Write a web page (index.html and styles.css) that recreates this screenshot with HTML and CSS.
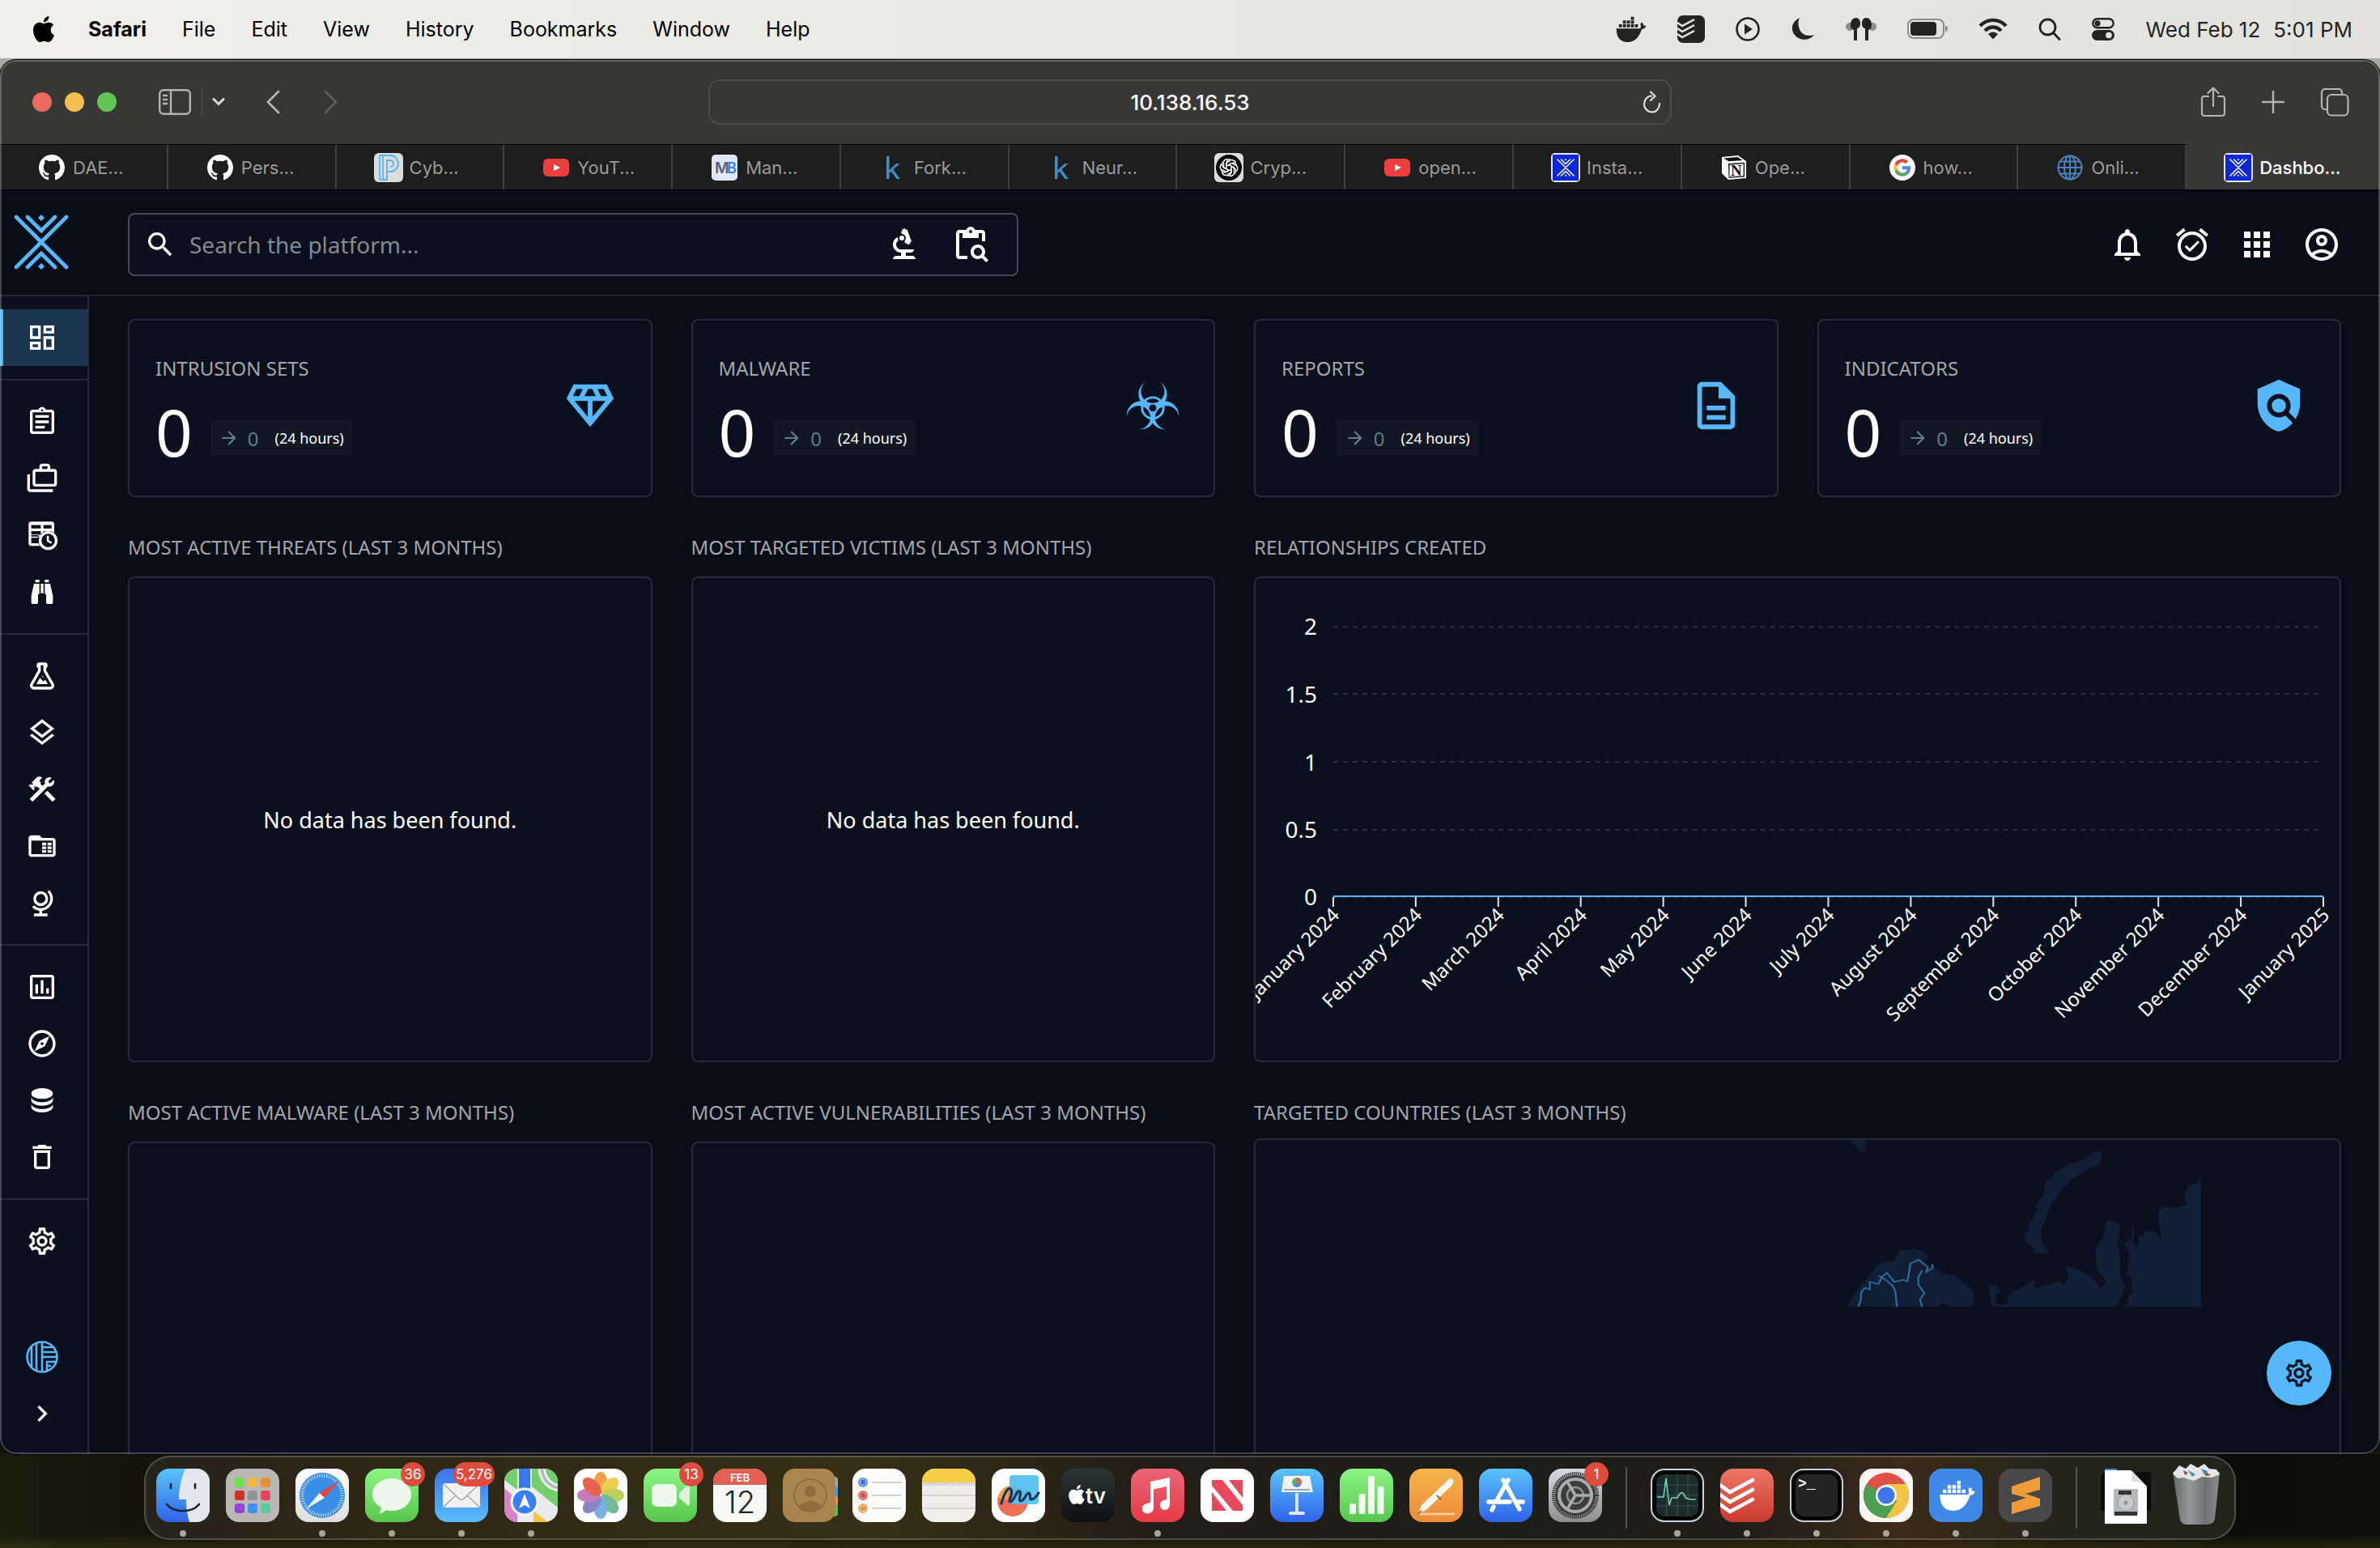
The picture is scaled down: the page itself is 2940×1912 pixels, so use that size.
FILE: index.html
```html
<!DOCTYPE html>
<html lang="en">
<head>
<meta charset="utf-8">
<title>Dashboard</title>
<link rel="stylesheet" href="styles.css">
</head>
<body>
<svg class="sprite" aria-hidden="true">
  <defs>
    <linearGradient id="g-blue" x1="0" y1="0" x2="0" y2="1"><stop offset="0" stop-color="#5ac4fb"/><stop offset="1" stop-color="#2f62ea"/></linearGradient>
    <linearGradient id="g-mail" x1="0" y1="0" x2="0" y2="1"><stop offset="0" stop-color="#3b72ee"/><stop offset="1" stop-color="#59bdfa"/></linearGradient>
    <linearGradient id="g-green" x1="0" y1="0" x2="0" y2="1"><stop offset="0" stop-color="#8df584"/><stop offset="1" stop-color="#58c64b"/></linearGradient>
    <linearGradient id="g-white" x1="0" y1="0" x2="0" y2="1"><stop offset="0" stop-color="#ffffff"/><stop offset="1" stop-color="#dedede"/></linearGradient>
    <linearGradient id="g-tv" x1="0" y1="0" x2="0" y2="1"><stop offset="0" stop-color="#2c3735"/><stop offset="1" stop-color="#0c1013"/></linearGradient>
    <linearGradient id="g-music" x1="0" y1="0" x2="0" y2="1"><stop offset="0" stop-color="#ec6477"/><stop offset="1" stop-color="#e53c46"/></linearGradient>
    <linearGradient id="g-orange" x1="0" y1="0" x2="0" y2="1"><stop offset="0" stop-color="#f5b54a"/><stop offset="1" stop-color="#ee8b38"/></linearGradient>
    <linearGradient id="g-grey" x1="0" y1="0" x2="0" y2="1"><stop offset="0" stop-color="#d5dde4"/><stop offset="1" stop-color="#8e8e8e"/></linearGradient>
    <linearGradient id="g-red" x1="0" y1="0" x2="0" y2="1"><stop offset="0" stop-color="#ee7566"/><stop offset="1" stop-color="#c93a2c"/></linearGradient>
    <linearGradient id="g-trash" x1="0" y1="0" x2="1" y2="0"><stop offset="0" stop-color="#6c6f72"/><stop offset=".35" stop-color="#a3a6a8"/><stop offset=".7" stop-color="#77797c"/><stop offset="1" stop-color="#96999b"/></linearGradient>
    <clipPath id="squircle"><rect width="66" height="66" rx="16"/></clipPath>
  </defs>
  <symbol id="i-github" viewBox="0 0 16 16"><path d="M8 0C3.58 0 0 3.58 0 8c0 3.54 2.29 6.53 5.47 7.59.4.07.55-.17.55-.38 0-.19-.01-.82-.01-1.49-2.01.37-2.53-.49-2.69-.94-.09-.23-.48-.94-.82-1.13-.28-.15-.68-.52-.01-.53.63-.01 1.08.58 1.23.82.72 1.21 1.87.87 2.33.66.07-.52.28-.87.51-1.07-1.78-.2-3.64-.89-3.64-3.95 0-.87.31-1.59.82-2.15-.08-.2-.36-1.02.08-2.12 0 0 .67-.21 2.2.82.64-.18 1.32-.27 2-.27s1.36.09 2 .27c1.53-1.04 2.2-.82 2.2-.82.44 1.1.16 1.92.08 2.12.51.56.82 1.27.82 2.15 0 3.07-1.87 3.75-3.65 3.95.29.25.54.73.54 1.48 0 1.07-.01 1.93-.01 2.2 0 .21.15.46.55.38A8.01 8.01 0 0 0 16 8c0-4.42-3.58-8-8-8z"/></symbol>
  <symbol id="i-youtube" viewBox="0 0 32 32"><rect y="5" width="32" height="22" rx="6" fill="#ec3f3d"/><path d="M13 12l8 4-8 4z" fill="#fff"/></symbol>
  <symbol id="i-kaggle" viewBox="0 0 32 32"><path d="M8 2h3.600v17l8.400-8h4.600l-8.200 7.600L25 30h-4.400l-6.800-9.200-2.200 2V30H8z" fill="#3f8ec4"/></symbol>
  <symbol id="i-cross" viewBox="0 0 68 68"><g fill="none" stroke="currentColor" stroke-width="4.600" stroke-linecap="round"><path d="M3 3l62 62M65 3L3 65M17 3l17 17L51 3M17 65l17-17 17 17"/></g><path d="M34 0l4 4-4 4-4-4zM34 60l4 4-4 4-4-4z" fill="currentColor"/></symbol>
  <symbol id="i-opencti" viewBox="0 0 36 36"><rect width="36" height="36" rx="5" fill="#e4e4ea"/><rect x="2" y="2" width="32" height="32" fill="#0c27d6"/><svg x="7" y="7" width="22" height="22" viewBox="0 0 68 68" color="#fff"><use href="#i-cross"/></svg></symbol>
  <symbol id="i-gear" viewBox="0 0 24 24"><path d="M19.430 12.980c.04-.32.07-.64.07-.98 0-.34-.03-.66-.07-.98l2.110-1.650c.19-.15.24-.42.12-.64l-2-3.460c-.09-.16-.26-.25-.44-.25-.06 0-.12.01-.17.03l-2.490 1c-.52-.4-1.080-.73-1.690-.98l-.38-2.650C14.460 2.180 14.250 2 14 2h-4c-.25 0-.46.18-.49.42l-.38 2.650c-.61.25-1.170.59-1.690.98l-2.490-1c-.06-.02-.12-.03-.18-.03-.17 0-.34.09-.43.25l-2 3.460c-.13.22-.07.49.12.64l2.110 1.650c-.04.32-.07.65-.07.98 0 .33.03.66.07.98l-2.110 1.650c-.19.15-.24.42-.12.64l2 3.460c.09.16.26.25.44.25.06 0 .12-.01.17-.03l2.490-1c.52.4 1.080.73 1.690.98l.38 2.650c.03.24.24.42.49.42h4c.25 0 .46-.18.49-.42l.38-2.650c.61-.25 1.170-.59 1.690-.98l2.490 1c.06.02.12.03.18.03.17 0 .34-.09.43-.25l2-3.460c.12-.22.07-.49-.12-.64l-2.110-1.650zm-1.980-1.710c.04.31.05.52.05.73 0 .21-.02.43-.05.73l-.14 1.130.89.7 1.080.84-.7 1.210-1.270-.51-1.040-.42-.9.68c-.43.32-.84.56-1.250.73l-1.060.43-.16 1.130-.2 1.350h-1.400l-.19-1.350-.16-1.130-1.060-.43c-.43-.18-.83-.41-1.230-.71l-.91-.7-1.060.43-1.270.51-.7-1.210 1.080-.84.89-.7-.14-1.130c-.03-.31-.05-.54-.05-.74s.02-.43.05-.73l.14-1.130-.89-.7-1.080-.84.7-1.210 1.270.51 1.040.42.9-.68c.43-.32.84-.56 1.250-.73l1.060-.43.16-1.130.2-1.350h1.390l.19 1.350.16 1.130 1.060.43c.43.18.83.41 1.230.71l.91.7 1.060-.43 1.270-.51.7 1.210-1.070.85-.89.7.14 1.130zM12 8c-2.210 0-4 1.790-4 4s1.790 4 4 4 4-1.790 4-4-1.790-4-4-4zm0 6c-1.100 0-2-.9-2-2s.9-2 2-2 2 .9 2 2-.9 2-2 2z"/></symbol>
  <symbol id="i-arrow" viewBox="0 0 24 24"><path d="M12 4l-1.410 1.410L16.170 11H4v2h12.170l-5.580 5.590L12 20l8-8z"/></symbol>
  <symbol id="i-whale" viewBox="0 -2 48 42"><path d="M0 18h38c2-1 2-4 1-6 0-2 1-3 2-4 3 2 3 4 3 5 2 0 3 0 4 1-1 3-4 5-7 5C38 30 31 40 18 40 5 40 0 31 0 18z"/><path d="M4 11h5v5H4zM10.500 11h5v5h-5zM17 11h5v5h-5zM23.500 11h5v5h-5zM30 11h5v5h-5zM10.500 5h5v5h-5zM17 5h5v5h-5zM23.500 5h5v5h-5zM23.500-1h5v5h-5z"/></symbol>
  <symbol id="i-apple" viewBox="0 0 24 24"><path d="M12.152 6.896c-.948 0-2.415-1.078-3.960-1.040-2.040.027-3.910 1.183-4.961 3.014-2.117 3.675-.546 9.103 1.519 12.090 1.013 1.454 2.208 3.090 3.792 3.039 1.520-.065 2.090-.987 3.935-.987 1.831 0 2.350.987 3.960.948 1.637-.026 2.676-1.480 3.676-2.948 1.156-1.688 1.636-3.325 1.662-3.415-.039-.013-3.182-1.221-3.220-4.857-.026-3.040 2.480-4.494 2.597-4.559-1.429-2.090-3.623-2.324-4.390-2.376-2-.156-3.675 1.090-4.610 1.090zM15.530 3.830c.843-1.012 1.400-2.427 1.245-3.830-1.207.052-2.662.805-3.532 1.818-.78.896-1.454 2.338-1.273 3.714 1.338.104 2.715-.688 3.559-1.701"/></symbol>
</svg>

<header class="menubar">
  <nav class="menubar__menus" aria-label="Menu bar">
    <button class="menu menu--apple" aria-label="Apple"><svg width="32" height="32"><use href="#i-apple"/></svg></button>
    <button class="menu menu--app">Safari</button>
    <button class="menu">File</button>
    <button class="menu">Edit</button>
    <button class="menu">View</button>
    <button class="menu">History</button>
    <button class="menu">Bookmarks</button>
    <button class="menu">Window</button>
    <button class="menu">Help</button>
  </nav>
  <div class="menubar__status">
    <svg width="38" height="32"><use href="#i-whale"/></svg>
    <svg width="34" height="34" viewBox="0 0 34 34"><rect width="34" height="34" rx="7"/><path d="M0 9l6 4 15-8M0 16l6 4 15-8M0 23l6 4 15-8" fill="none" stroke="#e8e7e3" stroke-width="2.400"/></svg>
    <svg width="30" height="30" viewBox="0 0 30 30"><circle cx="15" cy="15" r="13.500" fill="none" stroke="currentColor" stroke-width="2.600"/><path d="M11 8.500v13l10-6.500z"/></svg>
    <svg width="30" height="30" viewBox="0 0 30 30"><path d="M11 1C3 5 0 12 3 19c4 9 18 13 26 3-9 3-16-1-18-7-2-5-2-9 0-14z"/></svg>
    <svg width="38" height="30" viewBox="0 0 38 30"><ellipse cx="5" cy="12" rx="5" ry="5" opacity=".45"/><ellipse cx="33" cy="12" rx="5" ry="5" opacity=".45"/><path d="M6 10c0-6 3-9 7-9 3 0 5 3 5 7s-2 6-4 6v15h-4V16c-3-1-4-3-4-6zM32 10c0-6-3-9-7-9-3 0-5 3-5 7s2 6 4 6v15h4V16c3-1 4-3 4-6z"/></svg>
    <svg width="50" height="26" viewBox="0 0 50 26"><rect x="1" y="1" width="44" height="23" rx="7" fill="none" stroke="#8c8c89" stroke-width="2"/><rect x="4" y="4" width="32" height="17" rx="4"/><path d="M47 8.500c4 1 4 7 0 8z" fill="#8c8c89"/></svg>
    <svg width="36" height="28" viewBox="0 0 36 28"><g fill="none" stroke="currentColor" stroke-width="4.400"><path d="M2 10c9-9.500 23-9.500 32 0M8 16c6-6 14-6 20 0"/></g><path d="M12 20c4-3.500 8-3.500 12 0l-6 6.500z"/></svg>
    <svg width="28" height="28" viewBox="0 0 28 28"><g fill="none" stroke="currentColor" stroke-width="2.800" stroke-linecap="round"><circle cx="11.500" cy="11.500" r="9.500"/><path d="M18.500 18.500l7.500 8"/></g></svg>
    <svg width="28" height="28" viewBox="0 0 28 28"><rect x="1.300" y="1.300" width="25.400" height="11" rx="5.500" fill="none" stroke="currentColor" stroke-width="2.400"/><circle cx="7" cy="6.800" r="3.600"/><rect y="15" width="28" height="13" rx="6.500"/><circle cx="21" cy="21.500" r="3.800" fill="#e5e4e0"/></svg>
    <time class="menubar__clock"><span>Wed Feb 12</span><span>5:01 PM</span></time>
  </div>
</header>

<main class="window">
  <div class="toolbar">
    <div class="toolbar__left">
      <div class="lights">
        <button class="light light--close" aria-label="Close"></button>
        <button class="light light--min" aria-label="Minimise"></button>
        <button class="light light--max" aria-label="Zoom"></button>
      </div>
      <button class="tool tool--sidebar" aria-label="Sidebar"><svg width="40" height="32" viewBox="0 0 40 32"><g fill="none" stroke="currentColor" stroke-width="2.400"><rect x="1.200" y="1.200" width="37.600" height="29.600" rx="5"/><path d="M15 1v30M5 8h6M5 13h6M5 18h6"/></g></svg></button>
      <button class="tool tool--groups" aria-label="Tab groups"><svg width="16" height="10" viewBox="0 0 16 10"><path d="M2 1.500l6 6 6-6" fill="none" stroke="#dcdcda" stroke-width="3" stroke-linecap="round"/></svg></button>
      <button class="tool tool--back" aria-label="Back"><svg width="18" height="30" viewBox="0 0 18 30"><path d="M16 2L3 15l13 13" fill="none" stroke="currentColor" stroke-width="2.800" stroke-linecap="round"/></svg></button>
      <button class="tool tool--forward" aria-label="Forward" disabled><svg width="18" height="30" viewBox="0 0 18 30"><path d="M2 2l13 13L2 28" fill="none" stroke="currentColor" stroke-width="2.800" stroke-linecap="round"/></svg></button>
    </div>
    <div class="address">
      <input class="address__input" type="text" aria-label="Address" value="10.138.16.53">
      <button class="address__reload" aria-label="Reload"><svg width="26" height="28" viewBox="0 0 26 28"><path d="M13 6.500A9.500 10 0 1 0 23 16M12 1.500l5.500 5.300-5.500 5.200" fill="none" stroke="#dededc" stroke-width="2.200" stroke-linecap="round" stroke-linejoin="round"/></svg></button>
    </div>
    <div class="toolbar__right">
      <button class="tool" aria-label="Share"><svg width="32" height="38" viewBox="0 0 32 38"><g fill="none" stroke="currentColor" stroke-width="2.200" stroke-linecap="round" stroke-linejoin="round"><path d="M10 12H5a3 3 0 0 0-3 3v18a3 3 0 0 0 3 3h22a3 3 0 0 0 3-3V15a3 3 0 0 0-3-3h-5M16 24V2M9.500 8L16 1.500 22.500 8"/></g></svg></button>
      <button class="tool" aria-label="New tab"><svg width="28" height="28" viewBox="0 0 28 28"><path d="M14 1v26M1 14h26" stroke="currentColor" stroke-width="2.400" stroke-linecap="round"/></svg></button>
      <button class="tool" aria-label="Tab overview"><svg width="36" height="36" viewBox="0 0 36 36"><g fill="none" stroke="currentColor" stroke-width="2.200"><rect x="9" y="9" width="25.500" height="25.500" rx="5"/><path d="M9 27H6a4 4 0 0 1-4-4V6a4 4 0 0 1 4-4h17a4 4 0 0 1 4 4v3"/></g></svg></button>
    </div>
  </div>

  <nav class="tabs" aria-label="Tabs">
    <a class="tab" href="#"><svg class="tab__icon tab__icon--s" color="#fff"><use href="#i-github"/></svg>DAE...</a>
    <a class="tab" href="#"><svg class="tab__icon tab__icon--s" color="#fff"><use href="#i-github"/></svg>Pers...</a>
    <a class="tab" href="#"><svg class="tab__icon" viewBox="0 0 36 36"><rect width="36" height="36" rx="6" fill="#dcdcdc"/><path d="M7 3v30M11 33V3h9a10 10 0 0 1 0 20h-4V9h4a4 4 0 0 1 0 8M7 3h4M7 33h4M11 33h5V23" fill="none" stroke="#57b6ea" stroke-width="1.800"/></svg>Cyb...</a>
    <a class="tab" href="#"><svg class="tab__icon tab__icon--s"><use href="#i-youtube"/></svg>YouT...</a>
    <a class="tab" href="#"><svg class="tab__icon tab__icon--s" viewBox="0 0 32 32"><rect width="32" height="32" rx="5" fill="#dfe8f6"/><text x="4" y="23" class="glyph" font-size="19" fill="#56617a">M</text><text x="19" y="23" class="glyph" font-size="18" fill="#3b7ee8">B</text></svg>Man...</a>
    <a class="tab" href="#"><svg class="tab__icon tab__icon--s"><use href="#i-kaggle"/></svg>Fork...</a>
    <a class="tab" href="#"><svg class="tab__icon tab__icon--s"><use href="#i-kaggle"/></svg>Neur...</a>
    <a class="tab" href="#"><svg class="tab__icon" viewBox="0 0 36 36"><rect width="36" height="36" rx="6" fill="#dcdcdc"/><circle cx="18" cy="18" r="16" fill="#000"/><g fill="none" stroke="#fff" stroke-width="1.500"><path id="petal" d="M15 16.200v-3.800a4.300 4.300 0 0 1 6.400-3.700 4.300 4.300 0 0 1 5 3.600M15 16.200l6.500-3.700 5 3"/><use href="#petal" transform="rotate(60 18 18)"/><use href="#petal" transform="rotate(120 18 18)"/><use href="#petal" transform="rotate(180 18 18)"/><use href="#petal" transform="rotate(240 18 18)"/><use href="#petal" transform="rotate(300 18 18)"/></g></svg>Cryp...</a>
    <a class="tab" href="#"><svg class="tab__icon tab__icon--s"><use href="#i-youtube"/></svg>open...</a>
    <a class="tab" href="#"><svg class="tab__icon"><use href="#i-opencti"/></svg>Insta...</a>
    <a class="tab" href="#"><svg class="tab__icon tab__icon--s" viewBox="0 0 32 32"><path d="M1 3l20-2 10 7v21l-22 2-8-8z" fill="#fff"/><path d="M3.500 4.500l17-1.400 6 4-17 1.200zM9 11l20-1.300v17.800L9.500 28.800z" fill="#111"/><path d="M10.500 12.400l17.200-1.100v14.900l-17.200 1.100z" fill="#fff"/><text x="12" y="26" class="glyph glyph--serif" font-size="19" fill="#111">N</text></svg>Ope...</a>
    <a class="tab" href="#"><svg class="tab__icon tab__icon--s" viewBox="0 0 72 72"><circle cx="36" cy="36" r="36" fill="#fff"/><g transform="translate(12 12)"><path fill="#db4b3e" d="M24 9.500c3.540 0 6.710 1.220 9.210 3.600l6.850-6.850C35.900 2.380 30.470 0 24 0 14.620 0 6.510 5.380 2.560 13.220l7.980 6.190C12.430 13.720 17.740 9.500 24 9.500z"/><path fill="#5187ec" d="M46.980 24.550c0-1.570-.15-3.090-.38-4.550H24v9.020h12.940c-.58 2.960-2.260 5.480-4.780 7.180l7.730 6c4.510-4.180 7.090-10.360 7.090-17.650z"/><path fill="#f4bf42" d="M10.530 28.590c-.48-1.450-.76-2.990-.76-4.590s.27-3.140.76-4.590l-7.980-6.190C.92 16.460 0 20.120 0 24c0 3.880.92 7.540 2.560 10.780l7.970-6.190z"/><path fill="#58a55c" d="M24 48c6.480 0 11.930-2.130 15.890-5.810l-7.730-6c-2.150 1.450-4.920 2.300-8.160 2.300-6.260 0-11.570-4.220-13.470-9.910l-7.980 6.190C6.510 42.620 14.620 48 24 48z"/></g></svg>how...</a>
    <a class="tab" href="#"><svg class="tab__icon tab__icon--s" viewBox="0 0 32 32"><g fill="none" stroke="#4c82bb" stroke-width="2"><circle cx="16" cy="16" r="14.500"/><ellipse cx="16" cy="16" rx="7" ry="14.500"/><path d="M16 1v30M1.500 16h29M4 8.500h24M4 23.500h24"/></g></svg>Onli...</a>
    <a class="tab tab--active" href="#" aria-current="page"><svg class="tab__icon"><use href="#i-opencti"/></svg>Dashbo...</a>
  </nav>

  <div class="app">
    <header class="topbar">
      <a class="brand" href="#" aria-label="Home"><svg width="68" height="68"><use href="#i-cross"/></svg></a>
      <form class="search" role="search">
        <svg width="40" height="40" viewBox="0 0 24 24"><path d="M15.500 14h-.79l-.28-.27C15.410 12.590 16 11.110 16 9.500 16 5.910 13.090 3 9.500 3S3 5.910 3 9.500 5.910 16 9.500 16c1.610 0 3.090-.59 4.230-1.570l.27.28v.79l5 4.990L20.490 19l-4.990-5zm-6 0C7.010 14 5 11.990 5 9.500S7.010 5 9.500 5 14 7.010 14 9.500 11.990 14 9.500 14z"/></svg>
        <input class="search__input" type="text" aria-label="Search the platform" placeholder="Search the platform...">
        <button class="icon-btn" type="button" aria-label="Advanced search"><svg width="48" height="48" viewBox="0 0 24 24"><path d="M7 19c-1.100 0-2 .9-2 2h14c0-1.100-.9-2-2-2h-4v-2h3c1.100 0 2-.9 2-2h-8c-1.660 0-3-1.340-3-3 0-1.090.59-2.040 1.460-2.560C8.170 9.030 8 8.540 8 8c0-.21.04-.42.09-.62C6.280 8.130 5 9.920 5 12c0 2.760 2.240 5 5 5v2H7z"/><path d="M10.560 5.510C11.910 5.540 13 6.640 13 8c0 .75-.33 1.410-.85 1.870l.59 1.620.94-.34.34.94 1.880-.68-.34-.94.94-.34-2.740-7.520-.94.34-.34-.94-1.880.68.34.94-.94.35.9 2.470z"/><circle cx="10.500" cy="8" r="1.500"/></svg></button>
        <button class="icon-btn" type="button" aria-label="Bulk search"><svg width="48" height="48" viewBox="0 0 24 24"><path d="M5 5h2v3h10V5h2v5h2V5c0-1.100-.9-2-2-2h-4.180C14.400 1.840 13.300 1 12 1S9.600 1.840 9.180 3H5C3.900 3 3 3.900 3 5v14c0 1.100.9 2 2 2h5v-2H5V5zm7-2c.55 0 1 .45 1 1s-.45 1-1 1-1-.45-1-1 .45-1 1-1z"/><path d="M20.300 18.900c.4-.7.7-1.500.7-2.400 0-2.500-2-4.500-4.500-4.500S12 14 12 16.500s2 4.500 4.500 4.500c.9 0 1.700-.3 2.400-.7l2.700 2.700 1.400-1.400-2.700-2.700zm-3.800.1c-1.400 0-2.500-1.100-2.500-2.500s1.100-2.500 2.500-2.500 2.500 1.100 2.500 2.500-1.100 2.500-2.500 2.500z"/></svg></button>
      </form>
      <div class="topbar__actions">
        <button class="icon-btn" aria-label="Notifications"><svg width="48" height="48" viewBox="0 0 24 24"><path d="M12 22c1.100 0 2-.9 2-2h-4c0 1.100.9 2 2 2zm6-6v-5c0-3.070-1.630-5.640-4.500-6.320V4c0-.83-.67-1.500-1.500-1.500s-1.500.67-1.500 1.500v.68C7.640 5.360 6 7.920 6 11v5l-2 2v1h16v-1l-2-2zm-2 1H8v-6c0-2.480 1.510-4.500 4-4.500s4 2.020 4 4.500v6z"/></svg></button>
        <button class="icon-btn" aria-label="Triggers"><svg width="48" height="48" viewBox="0 0 24 24"><path d="M22 5.720l-4.600-3.860-1.290 1.530 4.600 3.860L22 5.720zM7.880 3.390L6.600 1.860 2 5.710l1.290 1.530 4.590-3.850zM12 4c-4.970 0-9 4.030-9 9s4.020 9 9 9c4.970 0 9-4.030 9-9s-4.030-9-9-9zm0 16c-3.870 0-7-3.130-7-7s3.130-7 7-7 7 3.130 7 7-3.130 7-7 7zm-1.460-5.470L8.410 12.400l-1.060 1.060 3.180 3.180 6-6-1.060-1.060-4.930 4.950z"/></svg></button>
        <button class="icon-btn" aria-label="Apps"><svg width="48" height="48" viewBox="0 0 24 24"><path d="M4 8h4V4H4v4zm6 12h4v-4h-4v4zm-6 0h4v-4H4v4zm0-6h4v-4H4v4zm6 0h4v-4h-4v4zm6-10v4h4V4h-4zm-6 4h4V4h-4v4zm6 6h4v-4h-4v4zm0 6h4v-4h-4v4z"/></svg></button>
        <button class="icon-btn" aria-label="Profile"><svg width="48" height="48" viewBox="0 0 24 24"><path d="M12 2C6.480 2 2 6.480 2 12s4.480 10 10 10 10-4.480 10-10S17.520 2 12 2zM7.350 18.500C8.660 17.560 10.260 17 12 17s3.340.56 4.650 1.500C15.340 19.440 13.740 20 12 20s-3.340-.56-4.650-1.500zm10.790-1.380C16.450 15.800 14.320 15 12 15s-4.450.8-6.140 2.120C4.700 15.730 4 13.950 4 12c0-4.420 3.580-8 8-8s8 3.580 8 8c0 1.950-.7 3.730-1.860 5.120z"/><path d="M12 6c-1.930 0-3.500 1.570-3.500 3.500S10.070 13 12 13s3.500-1.570 3.500-3.500S13.930 6 12 6zm0 5c-.83 0-1.500-.67-1.500-1.500S11.170 8 12 8s1.500.67 1.500 1.500S12.830 11 12 11z"/></svg></button>
      </div>
    </header>

    <div class="layout">
      <nav class="sidebar" aria-label="Sections">
        <ul class="sidebar__group">
          <li><a class="nav-item nav-item--active" href="#" aria-label="Home"><svg viewBox="0 0 24 24"><path d="M19 5v2h-4V5h4M9 5v6H5V5h4m10 8v6h-4v-6h4M9 17v2H5v-2h4M21 3h-8v6h8V3zM11 3H3v10h8V3zm10 8h-8v10h8V11zm-10 4H3v6h8v-6z"/></svg></a></li>
        </ul>
        <ul class="sidebar__group">
          <li><a class="nav-item" href="#" aria-label="Analyses"><svg viewBox="0 0 24 24"><path d="M7 15h7v2H7zm0-4h10v2H7zm0-4h10v2H7z"/><path d="M19 3h-4.180C14.400 1.840 13.300 1 12 1s-2.400.84-2.820 2H5c-1.100 0-2 .9-2 2v14c0 1.100.9 2 2 2h14c1.100 0 2-.9 2-2V5c0-1.100-.9-2-2-2zm-7-.25c.41 0 .75.34.75.75s-.34.75-.75.75-.75-.34-.75-.75.34-.75.75-.75zM19 19H5V5h14v14z"/></svg></a></li>
          <li><a class="nav-item" href="#" aria-label="Cases"><svg viewBox="0 0 24 24"><path d="M21 5h-3V3c0-1.100-.9-2-2-2h-4c-1.100 0-2 .9-2 2v2H7c-1.100 0-2 .9-2 2v9c0 1.100.9 2 2 2h14c1.100 0 2-.9 2-2V7c0-1.100-.9-2-2-2zm-9-2h4v2h-4V3zm9 13H7V7h14v9z"/><path d="M3 9H1v11c0 1.100.9 2 2 2h17v-2H3V9z"/></svg></a></li>
          <li><a class="nav-item" href="#" aria-label="Events"><svg viewBox="0 0 24 24"><path d="M4 2h15a2 2 0 0 1 2 2v6.300a7 7 0 0 0-2-1.100V9h-6v.7A7 7 0 0 0 10.300 12 7 7 0 0 0 9.700 13H11V9H4v3h5.500a7 7 0 0 0-.5 2H4v4h5.400c.3.700.6 1.400 1 2H4a2 2 0 0 1-2-2V4a2 2 0 0 1 2-2zm0 5h7V4.500H4zm9 0h6V4.500h-6zm-9 6h6v-1.500H4z"/><path fill-rule="evenodd" d="M16.500 9a7 7 0 1 1 0 14 7 7 0 0 1 0-14zm0 2a5 5 0 1 0 0 10 5 5 0 0 0 0-10zm-1 1.500H17v3.200l2.400 1.500-.8 1.200-3.100-1.900z"/></svg></a></li>
          <li><a class="nav-item" href="#" aria-label="Observations"><svg viewBox="0 0 24 24"><path d="M11 6H13V13H11V6M9 20A1 1 0 0 1 8 21H5A1 1 0 0 1 4 20V15L6 6H10V13A1 1 0 0 1 9 14V20M10 5H7V3H10V5M15 20V14A1 1 0 0 1 14 13V6H18L20 15V20A1 1 0 0 1 19 21H16A1 1 0 0 1 15 20M14 5V3H17V5H14Z"/></svg></a></li>
        </ul>
        <ul class="sidebar__group">
          <li><a class="nav-item" href="#" aria-label="Threats"><svg viewBox="0 0 24 24"><path d="M5 19A1 1 0 0 0 6 20H18A1 1 0 0 0 19 19C19 18.790 18.930 18.590 18.820 18.430L13 8.350V4H11V8.350L5.180 18.430C5.070 18.590 5 18.790 5 19M6 22A3 3 0 0 1 3 19C3 18.400 3.180 17.840 3.500 17.370L9 7.810V6A1 1 0 0 1 8 5V4A2 2 0 0 1 10 2H14A2 2 0 0 1 16 4V5A1 1 0 0 1 15 6V7.810L20.500 17.370C20.820 17.840 21 18.400 21 19A3 3 0 0 1 18 22H6M13 16L14.340 14.660L16.270 18H7.730L10.390 13.390L13 16M12.500 12A.5.5 0 0 1 13 12.500A.5.5 0 0 1 12.500 13A.5.5 0 0 1 12 12.500A.5.5 0 0 1 12.500 12Z"/></svg></a></li>
          <li><a class="nav-item" href="#" aria-label="Arsenal"><svg viewBox="0 0 24 24"><path d="M11.990 18.540l-7.370-5.730L3 14.070l9 7 9-7-1.630-1.270zM12 16l7.360-5.730L21 9l-9-7-9 7 1.630 1.270L12 16zm0-11.470L17.740 9 12 13.470 6.260 9 12 4.530z"/></svg></a></li>
          <li><a class="nav-item" href="#" aria-label="Techniques"><svg viewBox="0 0 24 24"><path d="M13.783 15.172l2.121-2.121 5.996 5.996-2.121 2.121z"/><path d="M17.500 10c1.930 0 3.500-1.570 3.500-3.500 0-.58-.16-1.120-.41-1.600l-2.700 2.700-1.490-1.490 2.700-2.700c-.48-.25-1.020-.41-1.600-.41C15.570 3 14 4.570 14 6.500c0 .41.08.8.21 1.160l-1.850 1.850-1.780-1.780.71-.71-1.410-1.410L12 3.490c-1.170-1.170-3.070-1.170-4.240 0L4.220 7.030l1.410 1.410H2.810l-.71.71 3.540 3.540.71-.71V9.150l1.410 1.410.71-.71 1.780 1.780-7.410 7.410 2.120 2.120L16.340 9.790c.36.13.75.21 1.160.21z"/></svg></a></li>
          <li><a class="nav-item" href="#" aria-label="Entities"><svg viewBox="0 0 24 24"><path d="M20 6h-8l-2-2H4c-1.100 0-2 .9-2 2v12c0 1.100.9 2 2 2h16c1.100 0 2-.9 2-2V8c0-1.100-.9-2-2-2zm0 12H4V8h16v10z"/><path d="M12 9.500h3v2h-3zM16 9.500h3v2h-3zM12 12.300h3v2h-3zM16 12.300h3v2h-3zM12 15h3v2h-3zM16 15h3v2h-3z"/></svg></a></li>
          <li><a class="nav-item" href="#" aria-label="Locations"><svg viewBox="0 0 24 24"><path d="M17.360 2.640L15.950 4.060C17.260 5.370 18 7.140 18 9A7 7 0 0 1 11 16C9.150 16 7.370 15.260 6.060 13.950L4.640 15.360C6.080 16.800 7.970 17.710 10 17.930V20H6V22H16V20H12V17.940C16.550 17.430 20 13.580 20 9C20 6.620 19.050 4.330 17.360 2.640M11 3.500A5.500 5.500 0 0 0 5.500 9A5.500 5.500 0 0 0 11 14.500A5.500 5.500 0 0 0 16.500 9A5.500 5.500 0 0 0 11 3.500M11 5.500C12.940 5.500 14.500 7.070 14.500 9A3.500 3.500 0 0 1 11 12.500A3.500 3.500 0 0 1 7.500 9A3.500 3.500 0 0 1 11 5.500Z"/></svg></a></li>
        </ul>
        <ul class="sidebar__group">
          <li><a class="nav-item" href="#" aria-label="Dashboards"><svg viewBox="0 0 24 24"><path d="M9 17H7v-7h2v7zm4 0h-2V7h2v10zm4 0h-2v-4h2v4zm2 2H5V5h14v14zm0-16H5c-1.100 0-2 .9-2 2v14c0 1.100.9 2 2 2h14c1.100 0 2-.9 2-2V5c0-1.100-.9-2-2-2z"/></svg></a></li>
          <li><a class="nav-item" href="#" aria-label="Investigations"><svg viewBox="0 0 24 24"><path d="M12 2C6.480 2 2 6.480 2 12s4.480 10 10 10 10-4.480 10-10S17.520 2 12 2zm0 18c-4.410 0-8-3.590-8-8s3.590-8 8-8 8 3.590 8 8-3.590 8-8 8zm-5.500-2.500l7.510-3.490L17.500 6.500 9.990 9.990 6.500 17.500zm5.500-6.600c.61 0 1.100.49 1.100 1.100s-.49 1.100-1.100 1.100-1.100-.49-1.100-1.100.49-1.100 1.100-1.100z"/></svg></a></li>
          <li><a class="nav-item" href="#" aria-label="Data"><svg viewBox="0 0 24 24"><ellipse cx="12" cy="7" rx="8" ry="4"/><path d="M4 9.500c0 2.200 3.600 4 8 4s8-1.800 8-4V12c0 2.200-3.600 4-8 4s-8-1.800-8-4zM4 14.500c0 2.200 3.600 4 8 4s8-1.800 8-4V17c0 2.200-3.600 4-8 4s-8-1.800-8-4z"/></svg></a></li>
          <li><a class="nav-item" href="#" aria-label="Trash"><svg viewBox="0 0 24 24"><path d="M6 19c0 1.100.9 2 2 2h8c1.100 0 2-.9 2-2V7H6v12zM8 9h8v10H8V9zm7.500-5l-1-1h-5l-1 1H5v2h14V4h-3.500z"/></svg></a></li>
        </ul>
        <ul class="sidebar__group sidebar__group--last">
          <li><a class="nav-item" href="#" aria-label="Settings"><svg><use href="#i-gear"/></svg></a></li>
        </ul>
        <ul class="sidebar__foot">
          <li><a class="nav-item nav-item--logo" href="#" aria-label="Filigran"><svg viewBox="0 0 40 40"><g fill="none" stroke="currentColor" stroke-width="2.600"><circle cx="20" cy="20" r="18.500"/><path d="M7 7v26M13 3v34M20 2v36M20 8h14M20 14h18M20 20h18M26 38V26h12M26 31h5"/></g></svg></a></li>
          <li><button class="nav-item" aria-label="Expand"><svg viewBox="0 0 24 24"><path d="M10 6L8.590 7.410 13.170 12l-4.580 4.590L10 18l6-6z"/></svg></button></li>
        </ul>
      </nav>

      <section class="content">
        <div class="grid">
          <article class="card stat">
            <div class="stat__body">
              <h2 class="label">Intrusion sets</h2>
              <p class="stat__line"><strong class="stat__value">0</strong><span class="trend"><svg><use href="#i-arrow"/></svg><span class="trend__value">0</span><span>(24 hours)</span></span></p>
            </div>
            <svg class="stat__icon" viewBox="0 0 24 24"><path d="M19 3H5L2 9l10 12L22 9l-3-6zM9.620 8l1.500-3h1.760l1.500 3H9.620zM11 10v6.680L5.440 10H11zm2 0h5.560L13 16.680V10zm6.260-2h-2.650l-1.500-3h2.650l1.500 3zM6.240 5h2.650l-1.500 3H4.740l1.500-3z"/></svg>
          </article>
          <article class="card stat">
            <div class="stat__body">
              <h2 class="label">Malware</h2>
              <p class="stat__line"><strong class="stat__value">0</strong><span class="trend"><svg><use href="#i-arrow"/></svg><span class="trend__value">0</span><span>(24 hours)</span></span></p>
            </div>
            <svg class="stat__icon" viewBox="0 0 24 24"><path d="M23 16.060C23 16.290 23 16.500 22.960 16.700C22.780 14.140 20.640 12.110 18 12.110C17.630 12.110 17.270 12.160 16.920 12.230C16.960 12.500 17 12.730 17 13C17 15.350 15.310 17.320 13.070 17.810C13.420 20.050 15.310 21.790 17.650 21.960C17.430 22 17.220 22 17 22C14.920 22 13.070 20.940 12 19.340C10.930 20.940 9.090 22 7 22C6.780 22 6.570 22 6.350 21.960C8.690 21.790 10.570 20.060 10.930 17.810C8.680 17.320 7 15.350 7 13C7 12.730 7.040 12.500 7.070 12.230C6.730 12.160 6.370 12.110 6 12.110C3.360 12.110 1.220 14.140 1.030 16.700C1 16.500 1 16.290 1 16.060C1 12.850 3.590 10.240 6.810 10.140C6.300 9.270 6 8.250 6 7.170C6 4.940 7.230 3 9.060 2C7.810 2.900 7 4.340 7 6C7 7.350 7.560 8.590 8.470 9.500C9.380 8.590 10.620 8.040 12 8.040C13.370 8.040 14.620 8.590 15.500 9.500C16.430 8.590 17 7.350 17 6C17 4.340 16.180 2.900 14.940 2C16.770 3 18 4.940 18 7.170C18 8.250 17.700 9.270 17.190 10.140C20.420 10.240 23 12.850 23 16.060M9.270 10.110C10.050 10.620 11 10.920 12 10.920C13 10.920 13.950 10.620 14.730 10.110C14 9.450 13.060 9.030 12 9.030C10.940 9.030 10 9.450 9.270 10.110M12 14.470C12.820 14.470 13.500 13.800 13.500 13A1.500 1.500 0 0 0 12 11.500A1.500 1.500 0 0 0 10.500 13C10.500 13.800 11.170 14.470 12 14.470M10.970 16.790C10.870 14.900 9.710 13.290 8.050 12.550C8.030 12.700 8 12.840 8 13C8 14.820 9.270 16.340 10.970 16.790M15.960 12.550C14.290 13.290 13.120 14.900 13 16.790C14.730 16.340 16 14.820 16 13C16 12.840 15.970 12.700 15.960 12.550Z"/></svg>
          </article>
          <article class="card stat">
            <div class="stat__body">
              <h2 class="label">Reports</h2>
              <p class="stat__line"><strong class="stat__value">0</strong><span class="trend"><svg><use href="#i-arrow"/></svg><span class="trend__value">0</span><span>(24 hours)</span></span></p>
            </div>
            <svg class="stat__icon" viewBox="0 0 24 24"><path d="M8 16h8v2H8zm0-4h8v2H8zm6-10H6c-1.100 0-2 .9-2 2v16c0 1.100.89 2 1.990 2H18c1.100 0 2-.9 2-2V8l-6-6zm4 18H6V4h7v5h5v11z"/></svg>
          </article>
          <article class="card stat">
            <div class="stat__body">
              <h2 class="label">Indicators</h2>
              <p class="stat__line"><strong class="stat__value">0</strong><span class="trend"><svg><use href="#i-arrow"/></svg><span class="trend__value">0</span><span>(24 hours)</span></span></p>
            </div>
            <svg class="stat__icon" viewBox="0 0 24 24"><path d="M21 5l-9-4-9 4v6c0 5.550 3.840 10.740 9 12 2.300-.56 4.330-1.900 5.880-3.710l-3.120-3.120c-1.940 1.290-4.580 1.070-6.290-.64-1.950-1.950-1.950-5.120 0-7.070 1.950-1.950 5.120-1.950 7.070 0 1.710 1.710 1.920 4.350.64 6.290l2.900 2.900C20.290 15.690 21 13.380 21 11V5z"/><circle cx="12" cy="12" r="3"/></svg>
          </article>
        </div>

        <div class="grid">
          <section class="widget"><h2 class="label">Most active threats (last 3 months)</h2><div class="card panel"><p>No data has been found.</p></div></section>
          <section class="widget"><h2 class="label">Most targeted victims (last 3 months)</h2><div class="card panel"><p>No data has been found.</p></div></section>
          <section class="widget widget--wide"><h2 class="label">Relationships created</h2>
            <div class="card panel">
              <svg class="chart" viewBox="0 0 1340 596" role="img" aria-label="Relationships created per month">
                <path class="chart__grid" d="M96 60h1224M96 143h1224M96 227h1224M96 311h1224M96 394h1224"/>
                <path class="chart__ticks" d="M96 394v12M198 394v12M300 394v12M402 394v12M504 394v12M606 394v12M708 394v12M810 394v12M912 394v12M1014 394v12M1116 394v12M1218 394v12M1320 394v12"/>
                <path class="chart__line" d="M96 393h1224"/>
                <g class="chart__y"><text x="76" y="70">2</text><text x="76" y="154">1.5</text><text x="76" y="238">1</text><text x="76" y="321">0.5</text><text x="76" y="404">0</text></g>
                <g class="chart__x">
                  <text transform="translate(105 418) rotate(-45)">January 2024</text>
                  <text transform="translate(207 418) rotate(-45)">February 2024</text>
                  <text transform="translate(309 418) rotate(-45)">March 2024</text>
                  <text transform="translate(411 418) rotate(-45)">April 2024</text>
                  <text transform="translate(513 418) rotate(-45)">May 2024</text>
                  <text transform="translate(615 418) rotate(-45)">June 2024</text>
                  <text transform="translate(717 418) rotate(-45)">July 2024</text>
                  <text transform="translate(819 418) rotate(-45)">August 2024</text>
                  <text transform="translate(921 418) rotate(-45)">September 2024</text>
                  <text transform="translate(1023 418) rotate(-45)">October 2024</text>
                  <text transform="translate(1125 418) rotate(-45)">November 2024</text>
                  <text transform="translate(1227 418) rotate(-45)">December 2024</text>
                  <text transform="translate(1329 418) rotate(-45)">January 2025</text>
                </g>
              </svg>
            </div>
          </section>
        </div>

        <div class="grid">
          <section class="widget"><h2 class="label">Most active malware (last 3 months)</h2><div class="card panel"></div></section>
          <section class="widget"><h2 class="label">Most active vulnerabilities (last 3 months)</h2><div class="card panel"></div></section>
          <section class="widget widget--wide widget--map"><h2 class="label">Targeted countries (last 3 months)</h2>
            <div class="card panel">
              <svg class="map" viewBox="170 204 930 618" preserveAspectRatio="none" aria-hidden="true">
                <g fill="#111e35">
                  <path d="M184 204h38v42h-14l-12-18z"/>
                  <path d="M176 822L192 775 215 735 245 680 270 654 297 652 312 612 335 613 350 605 370 615 388 638 375 650 385 675 400 672 425 700 455 708 490 745 505 770 508 805 503 822H443L428 810 415 813 413 822z"/>
                  <path d="M832 242L841 265 836 290 800 315 757 355 730 398 715 425 700 470 683 530 680 560 686 590 704 624H664L660 600 645 588 638 575V552L648 545 650 515 672 462 664 452 690 400 689 368 720 325 752 293 795 276 815 252z"/>
                  <path d="M553 822L548 795 546 755 543 736 570 748 574 768 562 775V800L575 816 592 812 595 780 662 722 667 728 658 745 675 753 685 740 712 738 725 724 742 744 754 712 744 672 780 685 810 712 840 754 851 725 828 685 822 608 843 565 851 508 862 500 889 515 888 545 881 590 888 625V705L901 740 893 785 877 822z"/>
                  <path d="M898 822L908 810 910 785 921 768 915 710 905 703 912 630 901 588 918 565 920 512 926 555 922 592 933 602 936 565 962 541 978 542 998 572 989 520V465L1005 450 1030 455 1062 445 1056 408 1066 375 1085 367 1100 342V822z"/>
                </g>
                <path d="M203 822l6-24 2-32 10-14 12 6v-28l22 8 10-26 12-16 12 20 8 14 24-8 10 6 4-26 4-40 12-8 10-6 8 10 16 16-4 18 16-12v-16M256 706l22 20 16 20 6 20 4 56M370 688l-10 24v28l16 32-12 24 6 26" fill="none" stroke="#2c6b98" stroke-width="5"/>
              </svg>
            </div>
          </section>
        </div>
      </section>
      <button class="fab" aria-label="Dashboard settings"><svg width="40" height="40"><use href="#i-gear"/></svg></button>
    </div>
  </div>
</main>

<footer class="dock-area">
  <div class="dock">
    <button class="dock__item is-running" aria-label="Finder"><svg viewBox="0 0 66 66"><g clip-path="url(#squircle)"><rect width="66" height="66" fill="url(#g-blue)"/><path d="M36 0c-5 12-8 24-8 38h9c0 10 1 19 4 28h25V0z" fill="#e4e9f1"/></g><g fill="none" stroke="#1c2430" stroke-width="2.600" stroke-linecap="round"><path d="M18 19v5M48 19v5M13 44c9 11 31 11 40 0"/></g></svg></button>
    <button class="dock__item" aria-label="Launchpad"><svg viewBox="0 0 66 66"><rect width="66" height="66" rx="16" fill="#b9b8b6"/><rect x="11" y="11" width="12" height="12" rx="3" fill="#6fe04f"/><rect x="27" y="11" width="12" height="12" rx="3" fill="#f2b93b"/><rect x="43" y="11" width="12" height="12" rx="3" fill="#ea8f36"/><rect x="11" y="27" width="12" height="12" rx="3" fill="#d33025"/><rect x="27" y="27" width="12" height="12" rx="3" fill="#8f9599"/><rect x="43" y="27" width="12" height="12" rx="3" fill="#e8465c"/><rect x="11" y="43" width="12" height="12" rx="3" fill="#9545d6"/><rect x="27" y="43" width="12" height="12" rx="3" fill="#3d8ff2"/><rect x="43" y="43" width="12" height="12" rx="3" fill="#58c9a0"/></svg></button>
    <button class="dock__item is-running" aria-label="Safari"><svg viewBox="0 0 66 66"><rect width="66" height="66" rx="16" fill="url(#g-white)"/><circle cx="33" cy="33" r="28" fill="#3a8ee6"/><circle cx="33" cy="33" r="24.500" fill="none" stroke="#d5e8fa" stroke-width="4" stroke-dasharray="1 2"/><path d="M54 15L29.500 30l6.500 6z" fill="#e2463b"/><path d="M13 50l16.500-20 6.500 6z" fill="#f5f5f5"/></svg></button>
    <button class="dock__item is-running" aria-label="Messages, 36 unread"><svg viewBox="0 0 66 66"><rect width="66" height="66" rx="16" fill="url(#g-green)"/><path d="M33 12c14 0 24 9 24 20S47 52 33 52c-3 0-5 0-7-1-3 3-6 4-9 4 2-2 3-4 3-7-7-4-11-9-11-16 0-11 10-20 24-20z" fill="#eef7ec"/></svg><span class="badge">36</span></button>
    <button class="dock__item is-running" aria-label="Mail, 5,276 unread"><svg viewBox="0 0 66 66"><rect width="66" height="66" rx="16" fill="url(#g-mail)"/><rect x="10" y="18" width="46" height="30" rx="3" fill="#f1f1f1"/><path d="M11 19l19 18c2 2 4 2 6 0l19-18M11 47l15-14M55 47L40 33" fill="none" stroke="#a9a9ab" stroke-width="1.600"/></svg><span class="badge">5,276</span></button>
    <button class="dock__item is-running" aria-label="Maps"><svg viewBox="0 0 66 66"><g clip-path="url(#squircle)"><rect width="66" height="66" fill="#e9e9ee"/><path d="M0 0h16v26L0 14zM34 0h32v48L34 22z" fill="#73cf6a"/><path d="M0 24l16 14v28H0z" fill="#d982c6"/><path d="M36 52l18 14H36z" fill="#f5c53c"/><path d="M18 0h14v40H18z" fill="#3879f0"/><path d="M46 0c2 14 10 22 22 24" fill="none" stroke="#f4f4f6" stroke-width="9"/><path d="M46 0c2 14 10 22 22 24" fill="none" stroke="#b7b9c2" stroke-width="4"/></g><circle cx="25" cy="41" r="16" fill="#3a7ff5" stroke="#fff" stroke-width="3"/><path d="M25 31l7 18-7-4-7 4z" fill="#fff"/></svg></button>
    <button class="dock__item" aria-label="Photos"><svg viewBox="0 0 66 66"><rect width="66" height="66" rx="16" fill="#fdfdfd"/><g opacity=".9"><ellipse cx="33" cy="18" rx="8.500" ry="14" fill="#f0953b"/><ellipse cx="33" cy="18" rx="8.500" ry="14" fill="#edc93c" transform="rotate(45 33 33)"/><ellipse cx="33" cy="18" rx="8.500" ry="14" fill="#b5cd45" transform="rotate(90 33 33)"/><ellipse cx="33" cy="18" rx="8.500" ry="14" fill="#62b58b" transform="rotate(135 33 33)"/><ellipse cx="33" cy="18" rx="8.500" ry="14" fill="#6aa8dc" transform="rotate(180 33 33)"/><ellipse cx="33" cy="18" rx="8.500" ry="14" fill="#7d79c2" transform="rotate(225 33 33)"/><ellipse cx="33" cy="18" rx="8.500" ry="14" fill="#bf71b4" transform="rotate(270 33 33)"/><ellipse cx="33" cy="18" rx="8.500" ry="14" fill="#e5533f" transform="rotate(315 33 33)"/></g></svg></button>
    <button class="dock__item" aria-label="FaceTime, 13 missed"><svg viewBox="0 0 66 66"><rect width="66" height="66" rx="16" fill="url(#g-green)"/><rect x="10" y="19" width="31" height="28" rx="7" fill="#eff8ee"/><path d="M44 30l10-9c1-1 3 0 3 1v22c0 1-2 2-3 1l-10-9z" fill="#dff2dd"/></svg><span class="badge">13</span></button>
    <button class="dock__item" aria-label="Calendar"><svg viewBox="0 0 66 66"><g clip-path="url(#squircle)"><rect width="66" height="66" fill="#f8f8f7"/><rect width="66" height="20" fill="#e35f54"/></g><text x="33" y="16" text-anchor="middle" class="glyph" font-size="13" fill="#fff">FEB</text><text x="33" y="55" text-anchor="middle" class="glyph glyph--thin" font-size="38" fill="#232323">12</text></svg></button>
    <button class="dock__item" aria-label="Contacts"><svg viewBox="0 0 66 66"><rect x="56" y="10" width="12" height="16" rx="4" fill="#a5a7a6"/><rect x="56" y="22" width="12" height="16" rx="4" fill="#4a9bdc"/><rect x="56" y="34" width="12" height="14" rx="4" fill="#e79540"/><rect x="56" y="45" width="12" height="14" rx="4" fill="#5fbb57"/><rect width="65" height="66" rx="15" fill="#a9844f"/><g fill="none" stroke="#8a683a" stroke-width="1.600"><circle cx="34" cy="33" r="20"/></g><circle cx="34" cy="28" r="7" fill="#8f6d3e"/><path d="M20 47c4-9 24-9 28 0-7 8-21 8-28 0z" fill="#8f6d3e"/></svg></button>
    <button class="dock__item" aria-label="Reminders"><svg viewBox="0 0 66 66"><rect width="66" height="66" rx="16" fill="#fbfbfa"/><g fill="none" stroke-width="1.600"><circle cx="13" cy="17" r="5" stroke="#3478f0"/><circle cx="13" cy="33" r="5" stroke="#e5493e"/><circle cx="13" cy="49" r="5" stroke="#ee9637"/><path d="M24 17h36M24 33h36M24 49h36" stroke="#c3c3c5" stroke-width="1.400"/></g><circle cx="13" cy="17" r="3.400" fill="#3478f0"/><circle cx="13" cy="33" r="3.400" fill="#e5493e"/><circle cx="13" cy="49" r="3.400" fill="#ee9637"/></svg></button>
    <button class="dock__item" aria-label="Notes"><svg viewBox="0 0 66 66"><g clip-path="url(#squircle)"><rect width="66" height="66" fill="#efeeeb"/><rect width="66" height="17" fill="#f6cd47"/><path d="M0 18h66M0 33h66M0 49h66" stroke="#cfceca" stroke-width="1.600"/><path d="M1 20h65" stroke="#b5b4b0" stroke-width="2" stroke-dasharray="1 2"/></g></svg></button>
    <button class="dock__item" aria-label="Freeform"><svg viewBox="0 0 66 66"><rect width="66" height="66" rx="16" fill="#fff"/><circle cx="26" cy="40" r="19" fill="#ef6f56"/><path d="M8 36c2-8 7-13 14-15l-2 17z" fill="#f0a23e"/><rect x="22" y="8" width="36" height="36" rx="4" fill="#53c0ea" opacity=".92"/><path d="M12 43c4-14 9-22 12-17 3 4-4 15-1 15 5 0 7-14 11-13 4 0-2 12 2 12 5 0 6-10 10-10 3 1 0 8 3 8s6-3 9-8" fill="none" stroke="#14385c" stroke-width="3.200" stroke-linecap="round"/></svg></button>
    <button class="dock__item" aria-label="TV"><svg viewBox="0 0 66 66"><rect width="66" height="66" rx="16" fill="url(#g-tv)"/><g fill="#fff"><use href="#i-apple" x="7" y="20" width="24" height="24"/></g><text x="30" y="43" class="glyph" font-size="26" fill="#fff">tv</text></svg></button>
    <button class="dock__item is-running" aria-label="Music"><svg viewBox="0 0 66 66"><rect width="66" height="66" rx="16" fill="url(#g-music)"/><path d="M24 16l24-5v33c0 9-12 9-12 1 0-5 4-6 8-7V22l-16 3.500V48c0 9-13 10-14 2-1-5 4-7 10-8z" fill="#fff"/></svg></button>
    <button class="dock__item" aria-label="News"><svg viewBox="0 0 66 66"><rect width="66" height="66" rx="16" fill="#fff"/><path d="M14 14h13l25 31v7H40L14 21zM35 14h17v22zM14 29v23h18z" fill="#e8495e"/></svg></button>
    <button class="dock__item" aria-label="Keynote"><svg viewBox="0 0 66 66"><rect width="66" height="66" rx="16" fill="url(#g-blue)"/><path d="M17 9h32l4 20H14z" fill="#f3f4f7"/><path d="M17 25h32v2H17z" fill="#9aa6b8"/><path d="M31 30h4v24h-4z" fill="#dfe4ec"/><rect x="23" y="53" width="20" height="4" rx="2" fill="#e5e8ee"/><circle cx="33" cy="17" r="6" fill="#58b66b"/><path d="M33 17v-6a6 6 0 0 1 5 9z" fill="#e5604c"/><path d="M33 17l5 3a6 6 0 0 1-9 1z" fill="#4f86e0"/></svg></button>
    <button class="dock__item" aria-label="Numbers"><svg viewBox="0 0 66 66"><rect width="66" height="66" rx="16" fill="url(#g-green)"/><g fill="#f4faf3"><rect x="12" y="43" width="8" height="13" rx="2"/><rect x="23.500" y="31" width="8" height="25" rx="2"/><rect x="35" y="9" width="8" height="47" rx="2"/><rect x="46.500" y="22" width="8" height="34" rx="2"/></g></svg></button>
    <button class="dock__item" aria-label="Pages"><svg viewBox="0 0 66 66"><rect width="66" height="66" rx="16" fill="url(#g-orange)"/><path d="M12 56h44" stroke="#f8d3a6" stroke-width="2.400"/><path d="M50 12c5 0 5 4 3 8L22 50 11 56l4-11z" fill="#f7f5f2"/><path d="M34 33l5 5M11 56l4-4" stroke="#6a5a48" stroke-width="1.600"/></svg></button>
    <button class="dock__item" aria-label="App Store"><svg viewBox="0 0 66 66"><rect width="66" height="66" rx="16" fill="url(#g-blue)"/><g stroke="#fff" stroke-width="5.400" stroke-linecap="round"><path d="M36 14L21 41M18 47l-2 4M30 14l20 36M12 41h26M46 41h8"/></g></svg></button>
    <button class="dock__item" aria-label="System Settings, 1 notice"><svg viewBox="0 0 66 66"><rect width="66" height="66" rx="16" fill="url(#g-grey)"/><circle cx="33" cy="33" r="27" fill="none" stroke="#333" stroke-width="4" stroke-dasharray="1.500 1"/><circle cx="33" cy="33" r="25" fill="#3b3c3d"/><circle cx="33" cy="33" r="20" fill="none" stroke="#a9abac" stroke-width="4"/><circle cx="33" cy="33" r="10" fill="none" stroke="#8e9091" stroke-width="2.600"/><path d="M33 33h20M33 33L23 16M33 33L23 50" stroke="#a9abac" stroke-width="3.600"/></svg><span class="badge">1</span></button>
    <span class="dock__sep"></span>
    <button class="dock__item is-running" aria-label="Activity Monitor"><svg viewBox="0 0 66 66"><rect x="1" y="1" width="64" height="64" rx="16" fill="#050505" stroke="#c6d6dc" stroke-width="2"/><rect x="7" y="7" width="52" height="52" rx="10" fill="#1d2c2b"/><path d="M20 7v52M33 7v52M46 7v52M7 20h52M7 33h52M7 46h52" stroke="#36504d" stroke-width="1"/><path d="M8 35h8l3-23 4 33 3-9h7c4-8 7-9 10 0l6 2h7" fill="none" stroke="#6fd3c0" stroke-width="1.600"/></svg></button>
    <button class="dock__item is-running" aria-label="Todoist"><svg viewBox="0 0 66 66"><g clip-path="url(#squircle)"><rect width="66" height="66" fill="url(#g-red)"/><path d="M-2 19l14 10 28-15M-2 31l14 10 28-15M-2 43l14 10 28-15" fill="none" stroke="#fff" stroke-width="4.600" stroke-linecap="round"/></g></svg></button>
    <button class="dock__item is-running" aria-label="Terminal"><svg viewBox="0 0 66 66"><rect x="1" y="1" width="64" height="64" rx="16" fill="#050505" stroke="#c6d0d8" stroke-width="2"/><rect x="7" y="7" width="52" height="52" rx="10" fill="#252525"/><text x="10" y="24" class="glyph glyph--mono" font-size="18" fill="#fff">&gt;_</text></svg></button>
    <button class="dock__item is-running" aria-label="Chrome"><svg viewBox="0 0 66 66"><rect width="66" height="66" rx="16" fill="#f7f6f4"/><circle cx="33" cy="33" r="28" fill="#de5145"/><path d="M33 33L8.700 19A28 28 0 0 0 33 61l14-20z" fill="#4c9f51"/><path d="M33 19h24.200A28 28 0 0 1 33 61l13-21z" fill="#f3c343"/><circle cx="33" cy="33" r="13" fill="#fff"/><circle cx="33" cy="33" r="10.500" fill="#4175e8"/></svg></button>
    <button class="dock__item is-running" aria-label="Docker"><svg viewBox="0 0 66 66"><rect width="66" height="66" rx="16" fill="#3f88e6"/><g fill="#fff"><use href="#i-whale" x="11" y="14" width="48" height="38"/></g></svg></button>
    <button class="dock__item is-running" aria-label="Sublime Text"><svg viewBox="0 0 66 66"><rect width="66" height="66" rx="16" fill="#484848"/><path d="M16 22l35-12v16L33 31l18 6v9L16 56V42l18-6-18-5z" fill="#f19c38"/></svg></button>
    <span class="dock__sep"></span>
    <button class="dock__item" aria-label="Disk image"><svg viewBox="0 0 66 66"><path d="M6 4L0 10v42h62V4z" fill="#0b0c0e"/><path d="M5 0h14l3 5H5z" fill="#3d8cc7"/><path d="M5 2h32l20 20v46H5z" fill="#fff"/><path d="M38 2c2 8 0 12 0 14 5 0 12 0 19 6z" fill="#dcdcdc"/><rect x="16" y="25" width="30" height="33" rx="2" fill="#b4b8ba"/><rect x="22" y="27" width="16" height="5" fill="#333"/><circle cx="31" cy="42" r="10" fill="#c6cacc" stroke="#94989a"/><circle cx="31" cy="42" r="2.500" fill="#8c9092"/><rect x="17" y="53" width="28" height="5" fill="#303234"/></svg></button>
    <button class="dock__item" aria-label="Trash"><svg viewBox="0 0 66 66"><path d="M3 4h58l-6 58c-1 5-5 7-11 7H22c-6 0-9-2-10-6z" fill="url(#g-trash)" opacity=".9"/><path d="M3 6l8-10 8 4 6-6 9 5 8-5 6 6 9 1 4 6-10 4-12-1-10 5-12-4-8 1z" fill="#e6e6e6"/><path d="M22 2l9 5-4 3zM38 0l4 8 4-5z" fill="#4a8ab0"/><path d="M44 4l6 4-7 1zM16 2l2 6 4-3z" fill="#8a4a3c"/></svg></button>
  </div>
</footer>
</body>
</html>
```

FILE: styles.css
```css
:root {
  --ui: Inter, "Liberation Sans", sans-serif;
  --app: "Noto Sans", "Open Sans", sans-serif;
  --bg: #080d17;
  --paper: #0a101d;
  --line: #262b37;
  --accent: #56b8fb;
}

* { box-sizing: border-box; }

body {
  margin: 0;
  height: 100vh;
  display: flex;
  flex-direction: column;
  overflow: hidden;
  background: linear-gradient(#a9a9a4 0, #a9a9a4 40%, #14150b 60%, #14150b 100%);
  font-family: var(--ui);
}

button {
  margin: 0;
  padding: 0;
  border: 0;
  background: none;
  color: inherit;
  font: inherit;
}

a { color: inherit; text-decoration: none; }
svg { display: block; flex: none; fill: currentColor; overflow: hidden; }
ul, h2, p { margin: 0; padding: 0; list-style: none; }
.sprite { position: absolute; width: 0; height: 0; }

.glyph { font-family: var(--ui); font-weight: 600; }
.glyph--serif { font-family: "Liberation Serif", serif; font-weight: 700; }
.glyph--mono { font-family: "Liberation Mono", monospace; }
.glyph--thin { font-weight: 300; }

/* Menu bar */
.menubar {
  flex: none;
  height: 72px;
  display: flex;
  align-items: center;
  justify-content: space-between;
  padding: 0 34px 0 38px;
  background: linear-gradient(90deg, #f0efeb, #e8e8e2 60%, #e3e2de);
  color: #000;
  font-size: 25px;
}
.menubar__menus { display: flex; align-items: center; gap: 44px; }
.menu--apple { margin-right: -5px; }
.menu--app { font-weight: 700; }
.menubar__status { display: flex; align-items: center; gap: 38px; color: #242422; }
.menubar__clock { display: flex; gap: 16px; font-size: 26px; }

/* Browser window */
.window {
  position: relative;
  flex: 1;
  min-height: 0;
  margin-top: 2px;
  display: flex;
  flex-direction: column;
  overflow: hidden;
  border-radius: 20px;
  background: var(--bg);
  box-shadow: 0 0 0 1px #000;
}
.window::after {
  content: "";
  position: absolute;
  inset: 0;
  border: 2px solid rgba(255, 255, 255, .24);
  border-radius: 20px;
  pointer-events: none;
}

.toolbar {
  flex: none;
  height: 104px;
  display: grid;
  grid-template-columns: 1fr 1190px 1fr;
  align-items: center;
  background: #373735;
  color: #b4b4b2;
}
.toolbar__left { display: flex; align-items: center; padding-left: 40px; }
.lights { display: flex; gap: 16px; margin-right: 52px; }
.light { width: 24px; height: 24px; border-radius: 50%; }
.light--close { background: #ed6a5f; }
.light--min { background: #f5bf50; }
.light--max { background: #62c655; }
.tool--groups {
  height: 36px;
  margin-left: 13px;
  padding: 0 12px;
  border-left: 1px solid #50504e;
}
.tool--back { margin-left: 38px; }
.tool--forward { margin-left: 54px; color: #5d5d5b; }
.toolbar__right { display: flex; align-items: center; justify-content: flex-end; gap: 44px; padding-right: 38px; }
.address {
  height: 56px;
  display: flex;
  align-items: center;
  padding: 0 10px 0 36px;
  border: 2px solid #4c4c4a;
  border-radius: 14px;
}
.address__input {
  flex: 1;
  min-width: 0;
  border: 0;
  background: none;
  color: #fff;
  font: 500 26px var(--ui);
  text-align: center;
}

.tabs { flex: none; height: 57px; display: flex; background: #1e1e1e; }
.tab {
  flex: 162 1 0;
  min-width: 0;
  display: flex;
  align-items: center;
  gap: 8px;
  padding-left: 46px;
  border: solid #000;
  border-width: 1px 0;
  box-shadow: inset -2px 0 #414140;
  color: #9b9b99;
  font-size: 22px;
  white-space: nowrap;
}
.tab__icon { width: 36px; height: 36px; }
.tab__icon--s { width: 32px; height: 32px; margin: 0 2px; }
.tab--active {
  flex-grow: 193;
  border-top-color: #373735;
  background: #373735;
  box-shadow: none;
  color: #fff;
  font-weight: 500;
}

/* Application */
.app {
  flex: 1;
  min-height: 0;
  display: flex;
  flex-direction: column;
  color: #fff;
  font-family: var(--app);
}
.topbar {
  flex: none;
  height: 131px;
  display: flex;
  align-items: center;
  padding: 4px 48px 0 17px;
  border-bottom: 2px solid #222733;
}
.brand { color: var(--accent); margin: -6px 73px 0 0; }
.search {
  width: 1100px;
  height: 78px;
  display: flex;
  align-items: center;
  padding: 0 33px 0 18px;
  border: 2px solid #454a56;
  border-radius: 8px;
  background: var(--paper);
}
.search__input {
  flex: 1;
  min-width: 0;
  padding: 0 16px;
  border: 0;
  background: none;
  color: #fff;
  font: 28px var(--app);
}
.search__input::placeholder { color: #868a90; opacity: 1; }
.search .icon-btn + .icon-btn { margin-left: 34px; }
.topbar__actions { display: flex; gap: 32px; margin-left: auto; }

.layout { position: relative; flex: 1; min-height: 0; display: flex; }

.sidebar {
  flex: none;
  width: 110px;
  display: flex;
  flex-direction: column;
  border-right: 2px solid var(--line);
  background: var(--paper);
}
.sidebar__group { padding: 16px 0; border-bottom: 2px solid var(--line); }
.sidebar__group--last { border-bottom: 0; }
.sidebar__foot { margin-top: auto; padding-bottom: 15px; }
.nav-item {
  width: 100%;
  height: 70px;
  display: flex;
  align-items: center;
  padding-left: 32px;
}
.nav-item svg { width: 40px; height: 40px; }
.nav-item--active { background: #1d3650; box-shadow: inset 4px 0 var(--accent); }
.nav-item--logo { color: var(--accent); }

.content {
  flex: 1;
  min-width: 0;
  overflow: hidden;
  padding: 28px 48px 0;
}
.grid { display: grid; grid-template-columns: repeat(4, minmax(0, 1fr)); gap: 48px; }
.card { border: 2px solid var(--line); border-radius: 8px; background: var(--paper); }
.label {
  color: #a4a6a9;
  font-size: 24px;
  font-weight: 400;
  line-height: 32px;
  text-transform: uppercase;
  white-space: nowrap;
}

.stat {
  height: 220px;
  display: flex;
  justify-content: space-between;
  align-items: center;
  padding: 0 40px 6px 32px;
}
.stat__body { padding-top: 14px; }
.stat__line { display: flex; align-items: center; margin-top: 18px; height: 88px; }
.stat__value { font-size: 80px; font-weight: 400; line-height: 88px; }
.stat__icon { width: 70px; height: 70px; color: var(--accent); }
.trend {
  height: 44px;
  display: flex;
  align-items: center;
  margin: 16px 0 0 22px;
  padding: 0 10px;
  background: #111723;
  font-size: 18px;
}
.trend svg { width: 26px; height: 26px; color: #607d8b; }
.trend__value { margin: 0 20px 0 10px; color: #607d8b; font-size: 24px; }

.widget { padding-top: 46px; }
.widget--wide { grid-column: span 2; }
.panel {
  height: 600px;
  display: flex;
  align-items: center;
  justify-content: center;
  margin-top: 20px;
  overflow: hidden;
  font-size: 27px;
}
.widget--map .panel {
  align-items: flex-start;
  justify-content: flex-end;
  margin-top: 16px;
  padding-right: 171px;
}
.map { width: 439px; height: 206px; }

.chart { width: 100%; height: 100%; }
.chart__grid { fill: none; stroke: #292e39; stroke-width: 2; stroke-dasharray: 6 6; }
.chart__ticks { fill: none; stroke: #e4e5e8; stroke-width: 2; }
.chart__line { fill: none; stroke: var(--accent); stroke-width: 2; }
.chart__y { font-size: 28px; text-anchor: end; fill: #fff; }
.chart__x { font-size: 24px; text-anchor: end; fill: #fff; }

.fab {
  position: absolute;
  right: 60px;
  bottom: 60px;
  width: 80px;
  height: 80px;
  display: grid;
  place-items: center;
  border-radius: 50%;
  background: var(--accent);
  color: #0a1a28;
  box-shadow: 0 6px 12px rgba(0, 0, 0, .5);
}

/* Dock */
.dock-area {
  flex: none;
  height: 116px;
  display: flex;
  justify-content: center;
  align-items: flex-start;
  padding-top: 2px;
  background:
    linear-gradient(transparent 85%, rgba(84, 78, 30, .35)),
    linear-gradient(90deg, #1a1c0d, #141108 8%, #1c190b 30%, #120d08 60%, #24170c 82%, #0b0c07 94%, #0e1007);
}
.dock {
  height: 104px;
  display: flex;
  gap: 20px;
  padding: 14px 13px;
  border: 2px solid rgba(255, 255, 255, .2);
  border-radius: 32px;
  background: linear-gradient(90deg, #26231a, #2f2716 12%, #352f16 35%, #221e16 48%, #1c1c18 65%, #1f1d17 76%, #3b2a1b 84%, #24241a 92%, #222319);
}
.dock__item { position: relative; flex: none; width: 66px; height: 66px; }
.dock__item > svg { width: 66px; height: 66px; overflow: visible; }
.dock__item.is-running::after {
  content: "";
  position: absolute;
  left: 29px;
  top: 76px;
  width: 8px;
  height: 8px;
  border-radius: 50%;
  background: #a9a697;
}
.badge {
  position: absolute;
  top: -8px;
  right: -8px;
  min-width: 30px;
  height: 30px;
  padding: 0 3px;
  border-radius: 15px;
  background: #dd4c3d;
  color: #fff;
  font-size: 17px;
  line-height: 30px;
  text-align: center;
}
.dock__sep { flex: none; width: 2px; height: 76px; margin: -2px 9px 0; background: #55534a; }
```
